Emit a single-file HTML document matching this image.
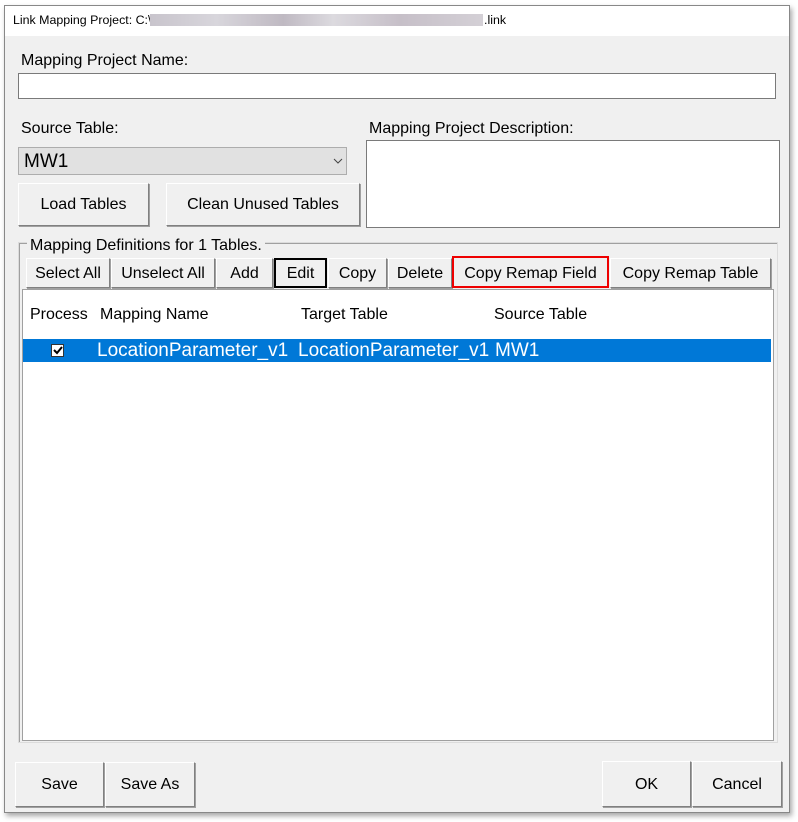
<!DOCTYPE html>
<html><head><style>
*{margin:0;padding:0;box-sizing:border-box}
body{width:798px;height:822px;background:#fff;position:relative;overflow:hidden;font-family:"Liberation Sans",Arial,sans-serif;color:#000}
.a{position:absolute}
.win{left:4px;top:5px;width:786px;height:808px;background:#f0f0f0;border:1px solid #888;box-shadow:2px 3px 5px rgba(0,0,0,.35)}
.tb{left:5px;top:6px;width:784px;height:30px;background:#fff}
.t{font-size:16px;white-space:nowrap;line-height:18px}
.btn{position:absolute;background:#f0f0f0;border-top:1px solid #fff;border-left:1px solid #fff;border-right:1px solid #808080;border-bottom:1px solid #808080;box-shadow:1px 1px 0 #a0a0a0;font-size:16px;display:flex;align-items:center;justify-content:center;white-space:nowrap;padding-top:1px}
.box{position:absolute;background:#fff;border:1px solid #7a7a7a}
</style></head><body>
<div class="a win"></div>
<div class="a tb"></div>
<div class="a" style="left:13px;top:13px;font-size:12.4px;line-height:14px;white-space:nowrap">Link Mapping Project: C:\</div>
<div class="a" style="left:150px;top:14px;width:333px;height:12px;background:linear-gradient(90deg,#c8c4cc,#d8d6dc 20%,#bfb9c2 40%,#dcdadf 55%,#c6bfc8 75%,#d4d0d6)"></div>
<div class="a" style="left:484px;top:13px;font-size:12.4px;line-height:14px">.link</div>

<div class="a t" style="left:21px;top:52px">Mapping Project Name:</div>
<div class="box" style="left:18px;top:73px;width:758px;height:26px"></div>

<div class="a t" style="left:21px;top:120px">Source Table:</div>
<div class="a" style="left:18px;top:147px;width:329px;height:28px;background:#e1e1e1;border:1px solid #adadad"></div>
<div class="a" style="left:24px;top:151px;font-size:19px;line-height:22px">MW1</div>
<svg class="a" style="left:333px;top:157px" width="10" height="8"><path d="M1 2 L5 6 L9 2" fill="none" stroke="#444" stroke-width="1"/></svg>

<div class="a t" style="left:369px;top:120px">Mapping Project Description:</div>
<div class="box" style="left:366px;top:140px;width:414px;height:88px"></div>

<div class="btn" style="left:18px;top:183px;width:131px;height:43px">Load Tables</div>
<div class="btn" style="left:166px;top:183px;width:194px;height:43px">Clean Unused Tables</div>

<div class="a" style="left:18px;top:242px;width:760px;height:501px;border:1px solid #dcdcdc;box-shadow:inset 1px 1px 0 #a0a0a0"></div>
<div class="a t" style="left:27px;top:237px;background:#f0f0f0;padding:0 3px">Mapping Definitions for 1 Tables.</div>

<div class="a" style="left:22px;top:289px;width:752px;height:452px;background:#fff;border:1px solid #a0a0a0"></div>

<div class="btn" style="left:26px;top:258px;width:84px;height:30px">Select All</div>
<div class="btn" style="left:111px;top:258px;width:104px;height:30px">Unselect All</div>
<div class="btn" style="left:216px;top:258px;width:57px;height:30px">Add</div>
<div class="btn" style="left:274px;top:258px;width:53px;height:30px;border:2px solid #000;box-shadow:none">Edit</div>
<div class="btn" style="left:328px;top:258px;width:59px;height:30px">Copy</div>
<div class="btn" style="left:388px;top:258px;width:64px;height:30px">Delete</div>
<div class="btn" style="left:452px;top:256px;width:157px;height:32px;border:2px solid #e00;box-shadow:none;padding-top:3px">Copy Remap Field</div>
<div class="btn" style="left:610px;top:258px;width:161px;height:30px">Copy Remap Table</div>

<div class="a t" style="left:30px;top:306px">Process</div>
<div class="a t" style="left:100px;top:306px">Mapping Name</div>
<div class="a t" style="left:301px;top:306px">Target Table</div>
<div class="a t" style="left:494px;top:306px">Source Table</div>

<div class="a" style="left:23px;top:339px;width:748px;height:23px;background:#0078d7"></div>
<div class="a" style="left:51px;top:344px;width:13px;height:13px;background:#fff;border:1px solid #333"></div>
<svg class="a" style="left:53px;top:346px" width="10" height="9"><path d="M1 4 L4 7 L9 1" fill="none" stroke="#000" stroke-width="2"/></svg>
<div class="a" style="left:97px;top:341px;font-size:19px;line-height:20px;color:#fff;white-space:nowrap">LocationParameter_v1</div>
<div class="a" style="left:298px;top:341px;font-size:19px;line-height:20px;color:#fff;white-space:nowrap">LocationParameter_v1</div>
<div class="a" style="left:495px;top:341px;font-size:19px;line-height:20px;color:#fff">MW1</div>

<div class="btn" style="left:15px;top:762px;width:89px;height:45px">Save</div>
<div class="btn" style="left:105px;top:762px;width:90px;height:45px">Save As</div>
<div class="btn" style="left:602px;top:761px;width:89px;height:46px">OK</div>
<div class="btn" style="left:692px;top:761px;width:90px;height:46px">Cancel</div>
</body></html>
